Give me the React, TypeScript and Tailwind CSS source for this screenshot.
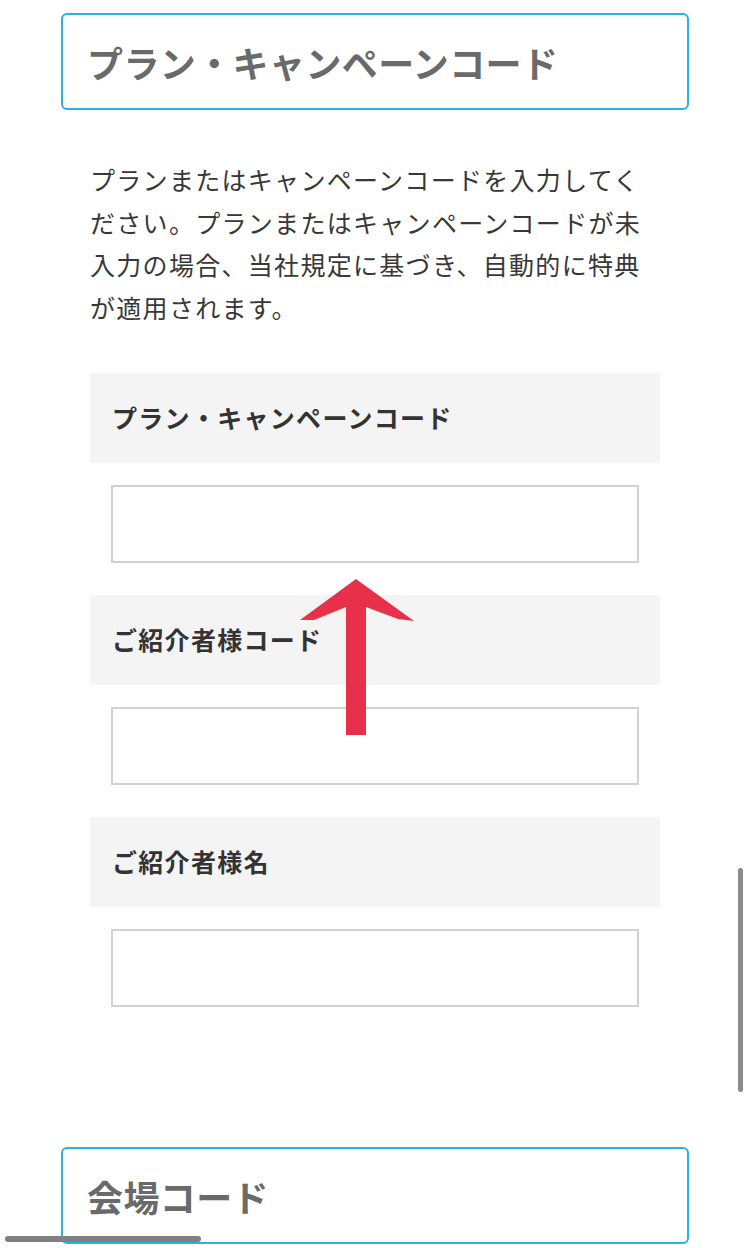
import React from 'react';

const jp = { fontFamily: '"Noto Sans CJK JP", "Noto Sans", sans-serif' };

function SectionHeader({ title }: { title: string }) {
  return (
    <div className="mx-[61px] h-[97px] rounded-[6px] border-2 border-[#2ab2dd] flex items-center pl-[24px]">
      <h2 className="text-[36px] font-bold text-[#6a6a6a] leading-none tracking-[0.4px]">{title}</h2>
    </div>
  );
}

function Field({ label }: { label: string }) {
  return (
    <div>
      <div className="h-[90px] bg-[#f4f4f4] flex items-center pl-[22px]">
        <span className="text-[25px] font-bold text-[#333] tracking-[1.3px]">{label}</span>
      </div>
      <div className="px-[21px] pt-[22px] pb-[32px]">
        <input type="text" className="block w-[528px] h-[78px] border-2 border-[#d2d2d6] bg-white outline-none" />
      </div>
    </div>
  );
}

const intro = [
  'プランまたはキャンペーンコードを入力してく',
  'ださい。プランまたはキャンペーンコードが未',
  '入力の場合、当社規定に基づき、自動的に特典',
  'が適用されます。',
];

export default function App() {
  return (
    <div className="relative w-[750px] h-[1248px] overflow-hidden bg-white" style={jp}>
      <div className="pt-[13px]">
        <SectionHeader title="プラン・キャンペーンコード" />

        {/* 説明文 */}
        <p className="mx-[90px] mt-[48px] text-[25px] leading-[42.5px] text-[#383838] tracking-[1.3px]">
          {intro.map((line) => (
            <span key={line} className="block whitespace-nowrap">{line}</span>
          ))}
        </p>

        <div className="mx-[90px] mt-[45px] w-[570px]">
          <Field label="プラン・キャンペーンコード" />
          <Field label="ご紹介者様コード" />
          <Field label="ご紹介者様名" />
        </div>

        <div className="mt-[108px]">
          <SectionHeader title="会場コード" />
        </div>
      </div>

      {/* 赤い矢印 */}
      <svg className="absolute left-[296px] top-[574px]" width="122" height="166" viewBox="0 0 122 166">
        <path d="M60 5 L118 47 L102 45 L70 33 L70 161 L50 161 L50 33 L18 46 L4 46 Z" fill="#e8304a" />
      </svg>

      {/* スクロールバー */}
      <div className="absolute left-[738px] top-[868px] w-[5px] h-[224px] rounded-full bg-[#8a8a8a]" />
      <div className="absolute left-[5px] top-[1236px] w-[196px] h-[6px] rounded-full bg-[#808080]" />
    </div>
  );
}
